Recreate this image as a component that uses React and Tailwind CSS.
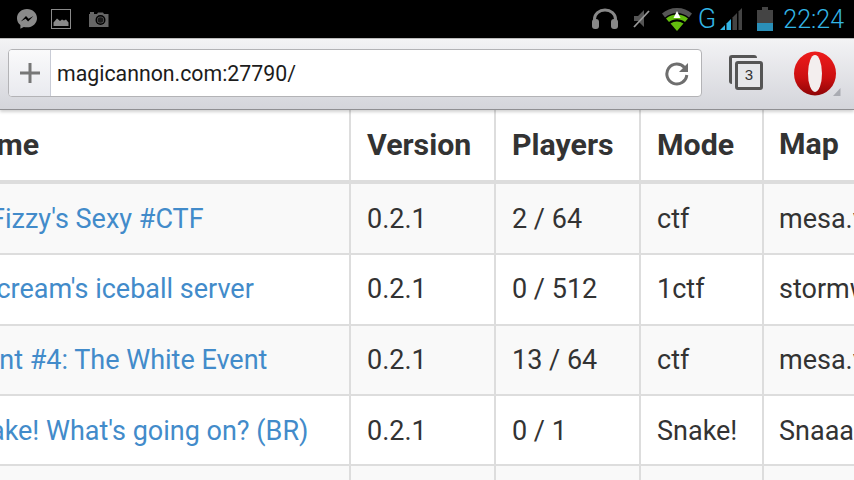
import React from 'react';

const rows = [
  { name: "Fizzy's Sexy #CTF", indent: 'pl-[47px]', pt: 'pt-[2px]', version: '0.2.1', players: '2 / 64', mode: 'ctf', map: 'mesa.vxl', bg: 'bg-[#f9f9f9]', h: 'h-[71px]' },
  { name: "Ice cream's iceball server", indent: 'pl-[11px]', pt: '', version: '0.2.1', players: '0 / 512', mode: '1ctf', map: 'stormwatch', bg: 'bg-white', h: 'h-[71px]' },
  { name: 'Event #4: The White Event', indent: 'pl-[14px]', pt: '', version: '0.2.1', players: '13 / 64', mode: 'ctf', map: 'mesa.vxl', bg: 'bg-[#f9f9f9]', h: 'h-[70px]' },
  { name: "Snake! What's going on? (BR)", indent: 'pl-[16px]', pt: 'pt-[2px]', version: '0.2.1', players: '0 / 1', mode: 'Snake!', map: 'Snaaake', bg: 'bg-white', h: 'h-[70px]' },
  { name: '', indent: 'pl-4', pt: '', version: '', players: '', mode: '', map: '', bg: 'bg-[#f9f9f9]', h: 'h-[70px]' },
];

const cols = 'grid grid-cols-[408px_145px_145px_123px_300px] -ml-[57px] w-[1121px]';
const cell = 'border-r-2 border-[#dddddd] flex items-center whitespace-nowrap overflow-hidden';
const lastCell = 'pl-[15px] flex items-center whitespace-nowrap overflow-hidden';

function StatusLeft() {
  return (
    <div className="flex items-center gap-[13px] pl-[16px]">
      <svg width="22" height="22" viewBox="0 0 22 22">
        <path d="M11 1C5.300 1 1 5 1 10.200c0 2.900 1.300 5.300 3.400 6.900v3.700l3.400-1.900c1 .3 2.100.4 3.200.4 5.700 0 10-4 10-9.100S16.700 1 11 1z" fill="#8a8a8a" />
        <path d="M4.800 13.400 10 8l2.600 2.700L17.400 8l-5.300 5.500-2.500-2.700z" fill="#000" />
      </svg>
      <svg width="21" height="21" viewBox="0 0 21 21">
        <rect x="0.500" y="0.500" width="19" height="19" fill="#000" stroke="#8a8a8a" />
        <path d="M2.500 17v-3.500L6 9.500l3 2.500 2-1.500 2 1 2-1 2.500 3V17z" fill="#8a8a8a" />
      </svg>
      <svg width="20" height="16" viewBox="0 0 20 16" className="ml-[4px]">
        <path d="M0 3h1V1h4v2h3l1-1.500h5L15 3h4.500v13H0z" fill="#666" />
        <circle cx="11.500" cy="9" r="5" fill="#000" />
        <circle cx="11.500" cy="9" r="3.600" fill="#555" />
        <circle cx="11.500" cy="9" r="2.800" fill="#1a1a1a" />
      </svg>
    </div>
  );
}

function StatusRight() {
  return (
    <div className="ml-auto flex items-center">
      <svg width="28" height="22" viewBox="0 0 28 22" className="mr-[12px]">
        <path d="M3.500 15v-4a10.500 9 0 0 1 21 0v4" fill="none" stroke="#888" strokeWidth="3" />
        <rect x="1" y="11" width="7" height="10" rx="3" fill="#888" />
        <rect x="20" y="11" width="7" height="10" rx="3" fill="#888" />
      </svg>
      <svg width="20" height="20" viewBox="0 0 20 20" className="mr-[10px]">
        <path d="M3 7h4l6-6v17l-6-6H3z" fill="#555" />
        <path d="M3 18 18 2" stroke="#999" strokeWidth="1.800" />
      </svg>
      <svg width="32" height="24" viewBox="0 0 32 24" className="mr-[5px]">
        <path d="M1 6.500C5 3 10 1 16 1s11 2 15 5.500l-3 4C24.500 7.600 20.500 6 16 6S7.500 7.600 4 10.500z" fill="#555" />
        <path d="M5 11.500C8 9 12 7.500 16 7.500s8 1.500 11 4l-3 3.500c-2.300-1.800-5-2.800-8-2.800s-5.700 1-8 2.800z" fill="#63bd0e" />
        <path d="M9.500 16.500c2-1.300 4.200-2.100 6.500-2.100s4.500.8 6.500 2.100L16 24z" fill="#63bd0e" />
        <path d="M16 4 19.500 11H12.500z" fill="#fff" />
      </svg>
      <span className="font-['Roboto'] font-light text-[27px] leading-none text-[#33b5e5] mr-[3px]">G</span>
      <svg width="24" height="24" viewBox="0 0 24 24" className="mr-[14px]">
        <path d="M1 23 6 18v5z" fill="#33b5e5" />
        <path d="M7.500 16.500 12 12v11H7.500z" fill="#33b5e5" />
        <path d="M13.500 10.500 18 6v17h-4.500z" fill="#444" />
        <path d="M19.500 4.500 23 1v22h-3.500z" fill="#444" />
      </svg>
      <svg width="16" height="24" viewBox="0 0 16 24" className="mr-[10px]">
        <path d="M5 0h6v3h5v21H0V3h5z" fill="#444" />
        <rect x="0" y="16" width="16" height="8" fill="#2a8fb8" />
      </svg>
      <span className="font-['Roboto'] font-light text-[25px] leading-none text-[#33b5e5] pr-[10px]">22:24</span>
    </div>
  );
}

function AddressBar() {
  return (
    <div className="flex w-[694px] h-[48px] rounded-[4px] border border-[#b3b3b6] overflow-hidden bg-white">
      <div className="w-[42px] shrink-0 flex items-center justify-center border-r border-[#c9ccd6] bg-gradient-to-b from-[#fafafb] to-[#e9eaef]">
        <svg width="20" height="20" viewBox="0 0 20 20">
          <path d="M0 10h20M10 0v20" stroke="#777" strokeWidth="3" />
        </svg>
      </div>
      <div className="flex-1 flex items-center pl-[6px] pt-[2px] text-[21.3px] text-[#1c1c1c] font-['Roboto']">magicannon.com:27790/</div>
      <div className="w-[48px] flex items-center justify-center">
        <svg width="26" height="26" viewBox="0 0 26 26">
          <path d="M20.500 7.500A10 10 0 1 0 22.800 15" fill="none" stroke="#6e6e6e" strokeWidth="3" />
          <path d="M24 3v9h-9z" fill="#6e6e6e" />
        </svg>
      </div>
    </div>
  );
}

function OperaLogo() {
  return (
    <svg width="48" height="46" viewBox="0 0 48 46">
      <defs>
        <linearGradient id="opera" x1="0" y1="0" x2="0" y2="1">
          <stop offset="0" stopColor="#ed1c1c" />
          <stop offset="0.600" stopColor="#cc0f10" />
          <stop offset="1" stopColor="#8e0507" />
        </linearGradient>
      </defs>
      <ellipse cx="22" cy="22.500" rx="21" ry="22" fill="url(#opera)" />
      <ellipse cx="22" cy="22.500" rx="7" ry="18.500" fill="#f3eeee" />
      <path d="M40 45 47.500 37v8z" fill="#a9abb2" />
    </svg>
  );
}

export default function App() {
  return (
    <div className="w-[854px] h-[480px] overflow-hidden flex flex-col bg-white font-['Roboto',sans-serif]">
      {/* Android status bar */}
      <div className="h-[38px] shrink-0 bg-black flex items-center">
        <StatusLeft />
        <StatusRight />
      </div>

      {/* Browser toolbar */}
      <div className="h-[72px] shrink-0 flex items-center pl-[8px] pb-[2px] bg-gradient-to-b from-[#f3f3f5] to-[#d4d5db] border-t border-[#bbbbbb] border-b border-b-[#8f8f93] shadow-[0_2px_3px_rgba(0,0,0,0.18)] relative z-10">
        <AddressBar />
        <div className="relative ml-[27px] w-[36px] h-[38px] mt-[2px]">
          <div className="absolute left-0 top-0 w-[28px] h-[29px] border-[3px] border-r-0 border-b-0 border-[#555] rounded-[3px]" />
          <div className="absolute left-[6px] top-[6px] w-[28px] h-[29px] border-[3px] border-[#555] rounded-[3px] bg-[#e6e7ea] flex items-center justify-center text-[15px] text-[#333] font-['Liberation_Sans']">3</div>
        </div>
        <div className="ml-[28px] mt-[2px]">
          <OperaLogo />
        </div>
      </div>

      {/* Server table */}
      <div className="flex-1 overflow-hidden">
        <div className={`${cols} h-[74px] border-b-4 border-[#dddddd] text-[30.3px] font-bold text-[#333333] bg-white pb-[3px]`}>
          <div className={`${cell} pl-4 -mb-[3px]`}>Name</div>
          <div className={`${cell} pl-4 -mb-[3px]`}>Version</div>
          <div className={`${cell} pl-4 -mb-[3px]`}>Players</div>
          <div className={`${cell} pl-4 -mb-[3px]`}>Mode</div>
          <div className={lastCell}>Map</div>
        </div>
        {rows.map((row, i) => (
          <div key={i} className={`${cols} ${row.h} ${row.bg} border-b-2 border-[#dddddd] text-[27px] text-[#333333]`}>
            <div className={`${cell} ${row.indent} ${row.pt} text-[#428bca]`}>{row.name}</div>
            <div className={`${cell} pl-4 ${row.pt}`}>{row.version}</div>
            <div className={`${cell} pl-4 ${row.pt}`}>{row.players}</div>
            <div className={`${cell} pl-4 ${row.pt}`}>{row.mode}</div>
            <div className={`${lastCell} ${row.pt}`}>{row.map}</div>
          </div>
        ))}
      </div>
    </div>
  );
}
